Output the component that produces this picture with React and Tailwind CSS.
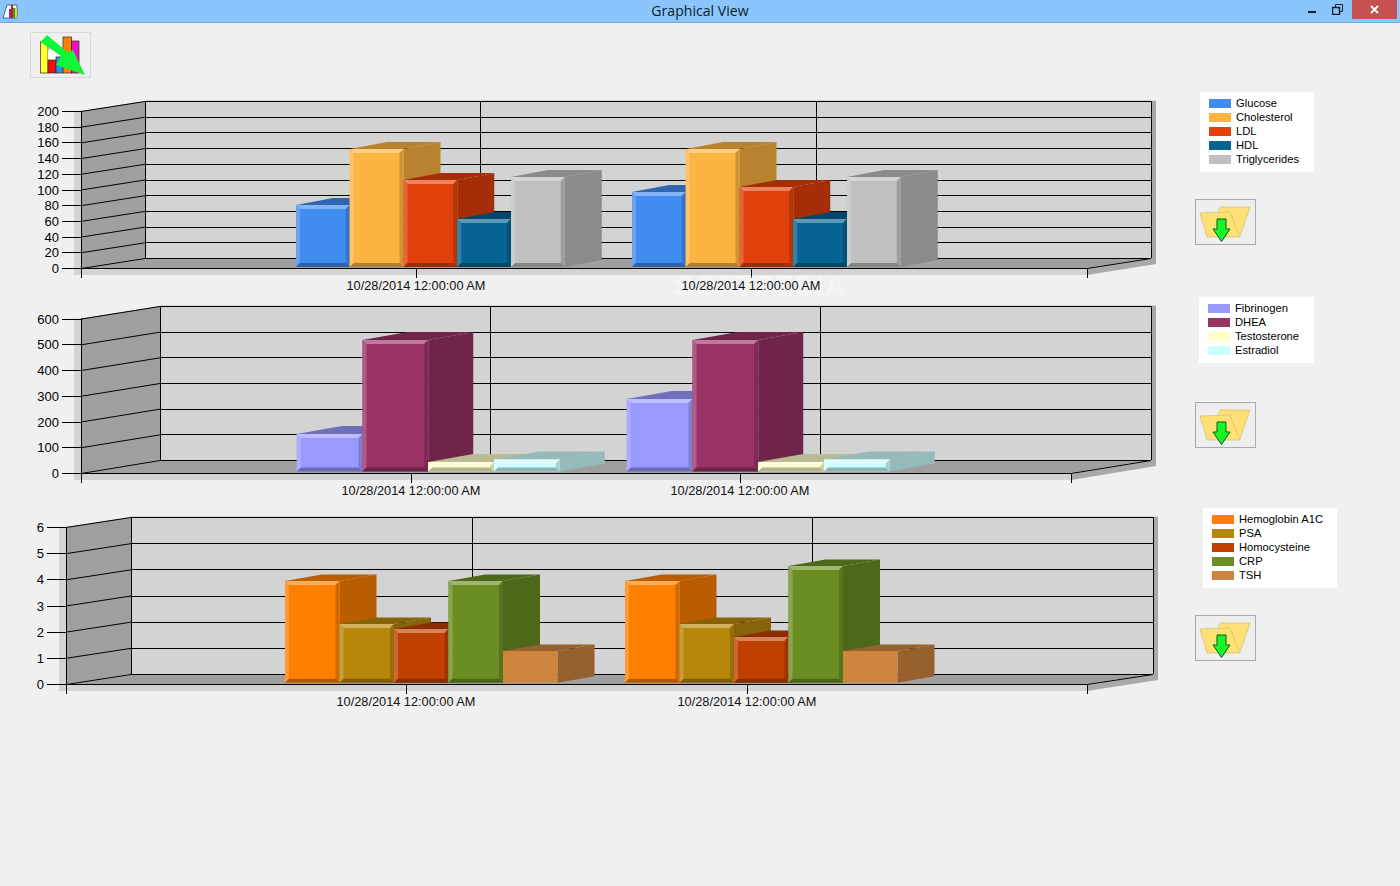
const SANS = '"Liberation Sans", Arial, sans-serif';

function mix(hex, target, t) {
  const n = parseInt(hex.slice(1), 16);
  const c = [(n >> 16) & 255, (n >> 8) & 255, n & 255];
  const o = c.map((v) => Math.round(v + (target - v) * t));
  return `rgb(${o[0]},${o[1]},${o[2]})`;
}

function Bar({ x, w, top, bottom, dx, dy, color, bevel = 4 }) {
  const r = x + w;
  const b = bevel;
  const shade = mix(color, 0, 0.27);
  return (
    <g>
      <polygon points={`${x},${top} ${x + dx},${top - dy} ${r + dx},${top - dy} ${r},${top}`} fill={shade} />
      <polygon points={`${r},${top} ${r + dx},${top - dy} ${r + dx},${bottom - dy} ${r},${bottom}`} fill={shade} />
      <rect x={x} y={top} width={w} height={bottom - top} fill={color} />
      {b > 0 && (
        <>
          <polygon points={`${x},${top} ${r},${top} ${r - b},${top + b} ${x + b},${top + b}`} fill={mix(color, 255, 0.35)} />
          <polygon points={`${x},${top} ${x + b},${top + b} ${x + b},${bottom - b} ${x},${bottom}`} fill={mix(color, 255, 0.2)} />
          <polygon points={`${r},${top} ${r},${bottom} ${r - b},${bottom - b} ${r - b},${top + b}`} fill={mix(color, 0, 0.18)} />
          <polygon points={`${x},${bottom} ${r},${bottom} ${r - b},${bottom - b} ${x + b},${bottom - b}`} fill={mix(color, 0, 0.3)} />
        </>
      )}
    </g>
  );
}

function Chart({ c, top, height }) {
  const steps = c.labels.length - 1;
  const ticks = c.labels.map((label, i) => {
    const t = i / steps;
    return { label, fy: c.fTop + (c.fBot - c.fTop) * t, by: c.bTop + (c.bBot - c.bTop) * t };
  });
  return (
    <svg width="1190" height={height} viewBox={`0 ${top} 1190 ${height}`} className="block shrink-0 overflow-visible" style={{ fontFamily: SANS }}>
      <polygon
        points={`${c.fL - 7},${c.fTop} ${c.fL},${c.fTop} ${c.fL},${c.fBot} ${c.fR},${c.fBot} ${c.fR},${c.fBot + 7} ${c.fL - 7},${c.fBot + 7}`}
        fill="#d3d3d3"
      />
      <rect x={c.bL} y={c.bTop - 1} width={c.bR - c.bL + 5} height="1" fill="#d3d3d3" />
      <polygon
        points={`${c.fR},${c.fBot + 7} ${c.bR + 5},${c.bBot + 6} ${c.bR + 5},${c.bTop} ${c.bR},${c.bTop} ${c.bR},${c.bBot} ${c.fR},${c.fBot}`}
        fill="#a9a9a9"
      />
      <rect x={c.bL} y={c.bTop} width={c.bR - c.bL} height={c.bBot - c.bTop} fill="#d3d3d3" />
      <polygon points={`${c.fL},${c.fTop} ${c.bL},${c.bTop} ${c.bL},${c.bBot} ${c.fL},${c.fBot}`} fill="#9f9f9f" />
      <polygon points={`${c.fL},${c.fBot} ${c.bL},${c.bBot} ${c.bR},${c.bBot} ${c.fR},${c.fBot}`} fill="#9f9f9f" />
      {ticks.map((t) => (
        <g key={t.label} stroke="#000" strokeWidth="1">
          <line x1={c.fL - 19} y1={Math.round(t.fy) + 0.5} x2={c.fL} y2={Math.round(t.fy) + 0.5} />
          <line x1={c.fL} y1={t.fy + 0.5} x2={c.bL} y2={t.by + 0.5} />
          <line x1={c.bL} y1={Math.round(t.by) + 0.5} x2={c.bR} y2={Math.round(t.by) + 0.5} />
        </g>
      ))}
      <g stroke="#000" strokeWidth="1">
        <line x1={c.fL + 0.5} y1={c.fTop} x2={c.fL + 0.5} y2={c.fBot + 10} />
        <line x1={c.bL + 0.5} y1={c.bTop} x2={c.bL + 0.5} y2={c.bBot} />
        <line x1={c.bR + 0.5} y1={c.bTop} x2={c.bR + 0.5} y2={c.bBot} />
        <line x1={c.fL} y1={c.fBot + 0.5} x2={c.fR} y2={c.fBot + 0.5} />
        <line x1={c.fR} y1={c.fBot + 0.5} x2={c.bR} y2={c.bBot + 0.5} />
        <line x1={c.fR + 0.5} y1={c.fBot} x2={c.fR + 0.5} y2={c.fBot + 10} />
        {c.grid.map((x) => (
          <line key={x} x1={x + 0.5} y1={c.bTop} x2={x + 0.5} y2={c.bBot} />
        ))}
        {c.xTicks.map((x) => (
          <line key={x} x1={x + 0.5} y1={c.fBot} x2={x + 0.5} y2={c.fBot + 10} />
        ))}
      </g>
      {c.bars.map((b, i) => (
        <Bar key={i} x={b.x} w={c.barW} top={b.top} bottom={c.barBot} dx={c.dx} dy={c.dy} color={b.color} bevel={b.bevel ?? 4} />
      ))}
      {ticks.map((t) => (
        <text key={t.label} x={c.fL - 22} y={Math.round(t.fy) + 5} textAnchor="end" fontSize="13" fill="#000">
          {t.label}
        </text>
      ))}
      {c.watermark && (
        <text x="760" y="296" textAnchor="middle" fontSize="30" fontWeight="700" fill="#ffffff" opacity="0.35">
          SOFTPEDIA
        </text>
      )}
      {c.xTicks.map((x) => (
        <text key={x} x={x} y={c.fBot + 22} textAnchor="middle" fontSize="12.75" fill="#111">
          10/28/2014 12:00:00 AM
        </text>
      ))}
    </svg>
  );
}

function Legend({ items, className }) {
  return (
    <div className={`bg-white pb-[6px] pl-[9px] pt-[4px] ${className}`}>
      {items.map(([name, color]) => (
        <div key={name} className="flex h-[14px] items-center">
          <span className="mr-[5px] h-[9px] w-[22px] shrink-0" style={{ backgroundColor: color }} />
          <span className="text-[11.2px] leading-[14px] text-black" style={{ fontFamily: SANS }}>
            {name}
          </span>
        </div>
      ))}
    </div>
  );
}

function FolderButton({ className }) {
  return (
    <button className={`flex h-[46px] w-[61px] items-center justify-center border border-[#ababab] bg-[#eeeeee] p-0 ${className}`}>
      <svg width="59" height="44" viewBox="0 0 59 44">
        <polygon points="24,7 54,7 44,36 14,36" fill="#ffe074" stroke="#d8c27c" strokeWidth="0.8" />
        <polygon points="4,13 34,12 44,37 11,37" fill="#ffe074" stroke="#d8c27c" strokeWidth="0.8" />
        <polygon points="21,19 30,19 30,29 34,29 25.5,41.5 17,29 21,29" fill="#15f52c" stroke="#0b5a16" strokeWidth="1" />
      </svg>
    </button>
  );
}

const P1 = ['#418cf0', '#fcb441', '#e0400a', '#056492', '#bfbfbf'];
const P2 = ['#9999ff', '#993366', '#ffffcc', '#ccffff'];
const P3 = ['#ff8000', '#b8860b', '#c04000', '#6b8e23', '#cd853f'];

const series = (xs, tops, colors) => xs.map((x, i) => ({ x, top: tops[i], color: colors[i] }));

const chart1 = {
  labels: ['200', '180', '160', '140', '120', '100', '80', '60', '40', '20', '0'],
  fL: 81, fR: 1087, fTop: 111, fBot: 268, bL: 145, bR: 1151, bTop: 101, bBot: 258,
  grid: [480, 816], xTicks: [416, 751], barW: 53.75, dx: 37, dy: 7, barBot: 267, watermark: true,
  bars: [
    ...series([296, 349.75, 403.5, 457.25, 511], [205, 149, 180, 219, 177], P1),
    ...series([632, 685.75, 739.5, 793.25, 847], [192, 149, 187, 219, 177], P1),
  ],
};
const chart2 = {
  labels: ['600', '500', '400', '300', '200', '100', '0'],
  fL: 81, fR: 1071, fTop: 318.6, fBot: 473, bL: 160, bR: 1151, bTop: 306, bBot: 460,
  grid: [490, 820], xTicks: [411, 740], barW: 65.75, dx: 45, dy: 8, barBot: 471.5,
  bars: [
    ...series([296.75, 362.5, 428.25, 494], [434, 340, 462, 459.5], P2),
    ...series([626.75, 692.5, 758.25, 824], [399, 340, 462, 459.5], P2),
  ],
};
const chart3 = {
  labels: ['6', '5', '4', '3', '2', '1', '0'],
  fL: 66, fR: 1087, fTop: 527, fBot: 684, bL: 131, bR: 1153, bTop: 517, bBot: 674,
  grid: [472, 812], xTicks: [406, 747], barW: 54.5, dx: 37, dy: 6.5, barBot: 682.7,
  bars: [
    ...series([285, 339.5, 394, 448.5, 503], [581, 624, 629, 581, 651], P3),
    ...series([625, 679.5, 734, 788.5, 843], [581, 624, 637, 566, 651], P3),
  ].map((b) => (b.color === '#cd853f' ? { ...b, bevel: 0 } : b)),
};

export default function App() {
  return (
    <div className="flex h-[886px] w-[1400px] flex-col overflow-hidden bg-[#f0f0f0]">
      <header className="relative flex h-[23px] shrink-0 items-center justify-center border-b border-[#6fa8dc] bg-[#8ac6fb]">
        <svg className="absolute left-[2px] top-[2px]" width="17" height="17" viewBox="0 0 17 17">
          <polygon points="1,16 5,3 15,3 15,16" fill="#fff" stroke="#1a4a8a" strokeWidth="0.8" />
          <rect x="7" y="7" width="2" height="9" fill="#a020c0" />
          <rect x="9" y="3" width="2" height="13" fill="#e01010" />
          <rect x="11" y="6" width="2" height="10" fill="#10b020" />
          <rect x="13" y="6" width="2" height="10" fill="#f0d010" />
        </svg>
        <span className="text-[14.1px] leading-[20px] text-[#101c28]" style={{ fontFamily: '"Open Sans", sans-serif' }}>
          Graphical View
        </span>
        <div className="absolute right-[3px] top-0 flex items-start">
          <span className="mr-[16px] mt-[11px] h-[2px] w-[8px] bg-[#14202c]" />
          <svg className="mr-[9px] mt-[4px]" width="11" height="11" viewBox="0 0 11 11" fill="none" stroke="#14202c">
            <rect x="0.5" y="3.5" width="7" height="7" strokeWidth="1.5" />
            <path d="M3.5 3V0.5H10.5V7.5H8" />
          </svg>
          <span className="flex h-[19px] w-[45px] items-center justify-center bg-[#c75050]">
            <svg width="9" height="9" viewBox="0 0 9 9" stroke="#fff" strokeWidth="1.8">
              <path d="M1 1L8 8M8 1L1 8" />
            </svg>
          </span>
        </div>
      </header>

      <div className="shrink-0 pl-[30px] pt-[9px]">
        <button className="flex h-[46px] w-[61px] items-center justify-center border border-[#d9d9d9] bg-[#f0f0f0] p-0">
          <svg width="59" height="44" viewBox="31 33 59 44">
            <rect x="40.5" y="42" width="7.5" height="31" fill="#ffff33" stroke="#3a2a10" strokeWidth="0.7" />
            <rect x="48" y="50" width="8" height="10" fill="#ffffff" />
            <rect x="48" y="60" width="8" height="13" fill="#ee1111" stroke="#3a2a10" strokeWidth="0.7" />
            <rect x="56" y="57" width="7" height="16" fill="#1e90ff" stroke="#3a2a10" strokeWidth="0.7" />
            <rect x="63" y="37" width="8.5" height="36" fill="#ff7f00" stroke="#3a2a10" strokeWidth="0.7" />
            <rect x="71.5" y="41" width="7.5" height="32" fill="#ee11cc" stroke="#3a2a10" strokeWidth="0.7" />
            <polygon points="47,35 67.7,52.3 73,50 85,75 56,65 61,56 40.5,42" fill="#11f53a" />
          </svg>
        </button>
      </div>

      <section className="mt-[14px] flex h-[205px] shrink-0">
        <Chart c={chart1} top={92} height={205} />
        <div className="flex flex-col items-start">
          <Legend className="ml-[10px] w-[114px]" items={[['Glucose', P1[0]], ['Cholesterol', P1[1]], ['LDL', P1[2]], ['HDL', P1[3]], ['Triglycerides', P1[4]]]} />
          <FolderButton className="ml-[5px] mt-[27px]" />
        </div>
      </section>

      <section className="flex h-[211px] shrink-0">
        <Chart c={chart2} top={297} height={211} />
        <div className="flex flex-col items-start">
          <Legend className="ml-[9px] w-[115px]" items={[['Fibrinogen', P2[0]], ['DHEA', P2[1]], ['Testosterone', P2[2]], ['Estradiol', P2[3]]]} />
          <FolderButton className="ml-[5px] mt-[39px]" />
        </div>
      </section>

      <section className="flex h-[210px] shrink-0">
        <Chart c={chart3} top={508} height={210} />
        <div className="flex flex-col items-start">
          <Legend className="ml-[13px] w-[134px]" items={[['Hemoglobin A1C', P3[0]], ['PSA', P3[1]], ['Homocysteine', P3[2]], ['CRP', P3[3]], ['TSH', P3[4]]]} />
          <FolderButton className="ml-[5px] mt-[27px]" />
        </div>
      </section>
    </div>
  );
}
